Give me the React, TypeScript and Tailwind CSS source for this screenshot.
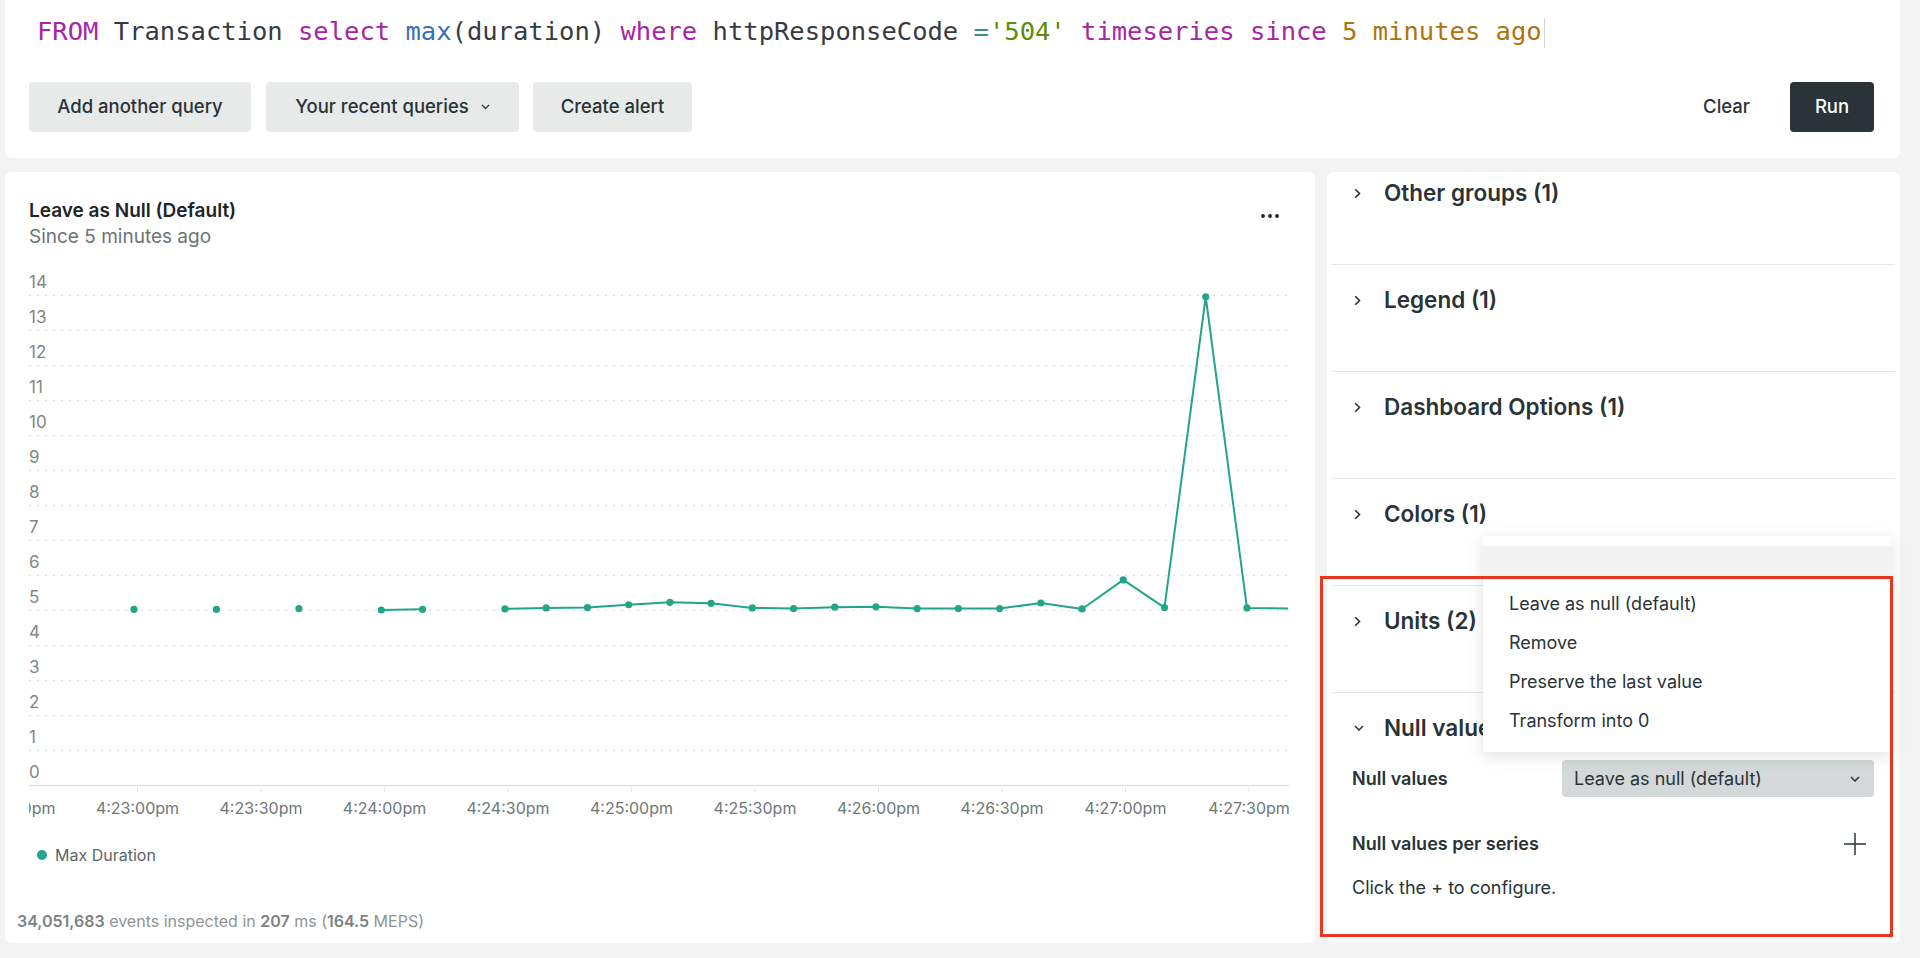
import React from "react";

const values: (number | null)[] = [
  5.02, null, 5.02, null, 5.04, null, 5.0, 5.02, null, 5.03, 5.06, 5.07, 5.15,
  5.22, 5.19, 5.06, 5.04, 5.08, 5.09, 5.04, 5.04, 5.04, 5.2, 5.03, 5.86, 5.07,
  13.95, 5.06, 5.04,
];

const xLabels = [
  "4:22:30pm",
  "4:23:00pm",
  "4:23:30pm",
  "4:24:00pm",
  "4:24:30pm",
  "4:25:00pm",
  "4:25:30pm",
  "4:26:00pm",
  "4:26:30pm",
  "4:27:00pm",
  "4:27:30pm",
];

const px = (k: number) => 129 + 41.22 * k;
const py = (v: number) => 525 - 35 * v;

function ChevronRight() {
  return (
    <svg width="7" height="11" viewBox="0 0 7 11" fill="none">
      <polyline points="1.2,1.2 5.5,5.5 1.2,9.8" stroke="#293338" strokeWidth="1.6" />
    </svg>
  );
}

function ChevronDown({ w = 10 }: { w?: number }) {
  return (
    <svg width={w} height={w * 0.6} viewBox="0 0 10 6" fill="none">
      <polyline points="1,1 5,5 9,1" stroke="#293338" strokeWidth="1.5" />
    </svg>
  );
}

function QueryLine() {
  return (
    <div className="h-[36px] whitespace-pre pl-[8px] text-[25.5px] leading-[36px] text-[#383a42] [font-family:'DejaVu_Sans_Mono',monospace]">
      <span className="text-[#a626a4]">FROM</span>
      <span> Transaction </span>
      <span className="text-[#a626a4]">select</span>
      <span> </span>
      <span className="text-[#3b6fb3]">max</span>
      <span>(duration) </span>
      <span className="text-[#a626a4]">where</span>
      <span> httpResponseCode </span>
      <span className="text-[#3d8c8c]">=</span>
      <span className="text-[#5b8c0a]">'504'</span>
      <span> </span>
      <span className="text-[#a626a4]">timeseries</span>
      <span> </span>
      <span className="text-[#a626a4]">since</span>
      <span> </span>
      <span className="text-[#b0730c]">5 minutes ago</span>
      <span className="ml-[2px] inline-block h-[30px] w-[1px] bg-[#d4d4d4] align-middle" />
    </div>
  );
}

function Chart() {
  const segments: { k: number; v: number }[][] = [];
  let cur: { k: number; v: number }[] = [];
  values.forEach((v, k) => {
    if (v === null) {
      if (cur.length) segments.push(cur);
      cur = [];
    } else {
      cur.push({ k, v });
    }
  });
  if (cur.length) segments.push(cur);

  return (
    <svg width="1310" height="570" className="mt-[11px] block" fontFamily="Inter, sans-serif">
      <defs>
        <clipPath id="plot">
          <rect x="24" y="0" width="1260" height="570" />
        </clipPath>
      </defs>
      {Array.from({ length: 15 }, (_, v) => (
        <g key={v}>
          {v > 0 && (
            <line
              x1="24"
              x2="1284"
              y1={py(v) + 0.5}
              y2={py(v) + 0.5}
              stroke="#d9dddd"
              strokeWidth="1"
              strokeDasharray="2 6"
            />
          )}
          <text x="24" y={py(v) - 7} fontSize="17" fill="#7f8787">
            {v}
          </text>
        </g>
      ))}
      <line x1="24" x2="1284" y1="525.5" y2="525.5" stroke="#e2e5e5" strokeWidth="1.5" />
      <g clipPath="url(#plot)">
        {xLabels.map((l, i) => {
          const x = 132.5 + 123.5 * (i - 1);
          return (
            <g key={l}>
              <line x1={x} x2={x} y1="527" y2="532" stroke="#e6e8e8" strokeWidth="1" />
              <text x={x} y="554" fontSize="16" fill="#6f7777" textAnchor="middle">
                {l}
              </text>
            </g>
          );
        })}
        {segments.map((s, i) =>
          s.length > 1 ? (
            <polyline
              key={i}
              points={s.map((p) => `${px(p.k)},${py(p.v)}`).join(" ")}
              fill="none"
              stroke="#22a589"
              strokeWidth="2"
              strokeLinejoin="round"
            />
          ) : null
        )}
        {values.map((v, k) =>
          v !== null && k < 28 ? (
            <circle key={k} cx={px(k)} cy={py(v)} r="3.6" fill="#22a589" />
          ) : null
        )}
      </g>
    </svg>
  );
}

function Section({ title }: { title: string }) {
  return (
    <div className="mx-[5px] h-[107px] shrink-0 border-b border-[#e4e6e6] pt-[21px]">
      <div className="flex h-[28px] items-center">
        <div className="flex w-[52px] justify-end pr-[23px]">
          <ChevronRight />
        </div>
        <span className="text-[22.5px] font-semibold text-[#293338]">{title}</span>
      </div>
    </div>
  );
}

export default function App() {
  return (
    <div className="min-h-screen bg-[#f3f3f3] pl-[5px] pr-[20px] text-[#293338] [font-family:Inter,sans-serif]">
      {/* Query editor */}
      <div className="h-[158px] rounded-b-[6px] bg-white pl-[24px] pr-[26px] pt-[13px]">
        <QueryLine />
        <div className="mt-[33px] flex items-center">
          <button className="h-[50px] w-[222px] rounded-[4px] bg-[#e8eaea] text-[18.5px] font-medium">
            Add another query
          </button>
          <button className="ml-[15px] flex h-[50px] w-[253px] items-center justify-center gap-[12px] rounded-[4px] bg-[#e8eaea] text-[18.5px] font-medium">
            Your recent queries
            <ChevronDown w={9} />
          </button>
          <button className="ml-[14px] h-[50px] w-[159px] rounded-[4px] bg-[#e8eaea] text-[18.5px] font-medium">
            Create alert
          </button>
          <div className="ml-auto flex items-center gap-[20px]">
            <button className="h-[50px] px-[20px] text-[18.5px] font-medium">Clear</button>
            <button className="h-[50px] w-[84px] rounded-[4px] bg-[#293338] text-[18.5px] font-medium text-white">
              Run
            </button>
          </div>
        </div>
      </div>

      <div className="mt-[14px] flex gap-[12px]">
        {/* Chart card */}
        <div className="flex h-[771px] w-[1310px] flex-col rounded-[6px] bg-white">
          <div className="flex items-start justify-between pl-[24px] pr-[35px] pt-[27px]">
            <div>
              <div className="text-[19px] font-semibold leading-[24px] text-[#1d2528]">
                Leave as Null (Default)
              </div>
              <div className="mt-[2px] text-[19px] leading-[24px] text-[#6b7373]">
                Since 5 minutes ago
              </div>
            </div>
            <svg width="20" height="6" viewBox="0 0 20 6" className="mt-[14px]">
              <circle cx="3" cy="3" r="1.9" fill="#1d2528" />
              <circle cx="10" cy="3" r="1.9" fill="#1d2528" />
              <circle cx="17" cy="3" r="1.9" fill="#1d2528" />
            </svg>
          </div>
          <Chart />
          <div className="mt-[15px] flex h-[20px] items-center gap-[8px] pl-[32px]">
            <span className="h-[10px] w-[10px] rounded-full bg-[#22a589]" />
            <span className="text-[16px] text-[#5c6567]">Max Duration</span>
          </div>
          <div className="mt-auto pb-[12px] pl-[12px] text-[16px] leading-[20px] text-[#8f9595]">
            <span className="font-semibold text-[#7b8383]">34,051,683</span> events inspected in{" "}
            <span className="font-semibold text-[#7b8383]">207</span> ms (
            <span className="font-semibold text-[#7b8383]">164.5</span> MEPS)
          </div>
        </div>

        {/* Settings panel */}
        <div className="relative h-[771px] w-[573px]">
          <div className="h-full overflow-hidden rounded-[6px] bg-white">
            <div className="-mt-[14px] flex flex-col">
              <Section title="Other groups (1)" />
              <Section title="Legend (1)" />
              <Section title="Dashboard Options (1)" />
              <Section title="Colors (1)" />
              <Section title="Units (2)" />
              <div className="mx-[5px] pt-[21px]">
                <div className="flex h-[28px] items-center">
                  <div className="flex w-[52px] justify-end pr-[20px]">
                    <ChevronDown w={10} />
                  </div>
                  <span className="text-[22.5px] font-semibold">Null values</span>
                </div>
                <div className="mt-[18px] flex items-center pl-[20px] pr-[21px]">
                  <span className="text-[18px] font-semibold">Null values</span>
                  <div className="ml-auto flex h-[37px] w-[312px] items-center justify-between rounded-[4px] bg-[#d4d8d9] pl-[12px] pr-[14px]">
                    <span className="text-[18px]">Leave as null (default)</span>
                    <ChevronDown w={10} />
                  </div>
                </div>
                <div className="mt-[33px] flex items-center pl-[20px] pr-[29px]">
                  <span className="text-[18px] font-semibold">Null values per series</span>
                  <svg width="22" height="22" viewBox="0 0 22 22" className="ml-auto">
                    <line x1="11" y1="0" x2="11" y2="22" stroke="#293338" strokeWidth="1.5" />
                    <line x1="0" y1="11" x2="22" y2="11" stroke="#293338" strokeWidth="1.5" />
                  </svg>
                </div>
                <div className="mt-[17px] pl-[20px] text-[18px]">Click the + to configure.</div>
              </div>
            </div>
          </div>

          {/* Dropdown menu */}
          <div className="absolute left-[156px] top-[364px] w-[408px] bg-white shadow-[0_4px_16px_rgba(0,0,0,0.12)]">
            <div className="h-[10px] bg-white" />
            <div className="h-[30px] bg-[#f2f2f2]" />
            <div className="pb-[12px] pt-[8px]">
              {["Leave as null (default)", "Remove", "Preserve the last value", "Transform into 0"].map(
                (o) => (
                  <div key={o} className="flex h-[39px] items-center pl-[26px] text-[18px]">
                    {o}
                  </div>
                )
              )}
            </div>
          </div>

          {/* Highlight box */}
          <div className="pointer-events-none absolute -left-[7px] top-[404px] h-[361px] w-[573px] border-[3px] border-[#e8361f]" />
        </div>
      </div>
    </div>
  );
}
